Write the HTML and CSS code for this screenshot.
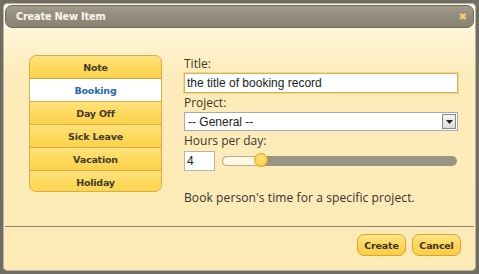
FILE: index.html
```html
<!DOCTYPE html>
<html>
<head>
<meta charset="utf-8">
<link rel="stylesheet" href="styles.css">
</head>
<body>
<div class="dialog">
  <div class="titlebar">
    <span class="title">Create New Item</span>
    <span class="close">&#x2716;</span>
  </div>
  <div class="content">
    <ul class="menu">
      <li class="item">Note</li>
      <li class="item active">Booking</li>
      <li class="item">Day Off</li>
      <li class="item">Sick Leave</li>
      <li class="item">Vacation</li>
      <li class="item last">Holiday</li>
    </ul>
    <div class="form">
      <div class="label">Title:</div>
      <div class="input text-input">the title of booking record</div>
      <div class="label">Project:</div>
      <div class="select">
        <span class="select-text">-- General --</span>
        <span class="select-btn"><svg width="7" height="4" viewBox="0 0 7 4"><path d="M0 0h7L3.5 4z" fill="#222"/></svg></span>
      </div>
      <div class="label">Hours per day:</div>
      <div class="hours-row">
        <div class="input hours">4</div>
        <div class="slider">
          <div class="track-fill"></div>
          <div class="thumb"></div>
        </div>
      </div>
      <p class="desc">Book person's time for a specific project.</p>
    </div>
  </div>
  <div class="footer">
    <button class="btn">Create</button>
    <button class="btn">Cancel</button>
  </div>
</div>
</body>
</html>
```
FILE: styles.css
```css
html, body {
  margin: 0;
  padding: 0;
}
body {
  background: #716c62;
  width: 479px;
  height: 274px;
  padding: 3px;
  box-sizing: border-box;
}
.dialog {
  width: 473px;
  height: 268px;
  box-sizing: border-box;
  border-radius: 5px;
  background: linear-gradient(#fffcee 0px, #fff5d6 30px, #fdecbb 70px, #fdeab5 100%);
  padding: 2px;
  display: flex;
  flex-direction: column;
  box-shadow: 0 0 0 1px #b7b2a4 inset;
}
.titlebar {
  height: 23px;
  box-sizing: border-box;
  border: 1px solid #6f695d;
  border-radius: 7px;
  background: linear-gradient(#a19b8b, #938c7d 50%, #8a8374);
  display: flex;
  align-items: center;
  justify-content: space-between;
  padding: 0 6px 0 10px;
}
.title {
  font-family: "DejaVu Sans", sans-serif;
  font-weight: bold;
  font-size: 9.8px;
  color: #fbf8ee;
  letter-spacing: -0.2px;
}
.close {
  color: #f5d562;
  font-size: 10px;
  font-family: "DejaVu Sans", sans-serif;
  line-height: 1;
  margin-top: 1px;
}
.content {
  display: flex;
  padding: 27px 0 0 24px;
  height: 199px;
  box-sizing: border-box;
  border-bottom: 1px solid #8a826d;
}
.menu {
  list-style: none;
  margin: 0;
  padding: 0;
  width: 133px;
  height: 137px;
  border: 1px solid #d7ae45;
  border-radius: 7px;
  overflow: hidden;
  box-sizing: border-box;
  background: #fcd54e;
}
.item {
  height: 23px;
  box-sizing: border-box;
  border-bottom: 1px solid #d9b046;
  background: linear-gradient(#ffe27e, #fdd95d 50%, #fcd24a);
  font-family: "DejaVu Sans", sans-serif;
  font-weight: bold;
  font-size: 9.5px;
  color: #3f3a2c;
  display: flex;
  align-items: center;
  justify-content: center;
  letter-spacing: -0.2px;
}
.item.last {
  border-bottom: none;
}
.item.active {
  background: #ffffff;
  color: #2468b4;
  border-top: 1px solid #c9a23c;
  margin-top: -1px;
  height: 24px;
}
.form {
  margin-left: 22px;
  padding-top: 5px;
  width: 274px;
  display: flex;
  flex-direction: column;
  font-family: "Open Sans", sans-serif;
  color: #333;
}
.label {
  font-size: 12px;
  line-height: 16px;
  height: 17px;
  margin-top: -4px;
  color: #3a3a2a;
}
.label + .input, .label + .select {
  margin-bottom: 6px;
}
.input {
  background: #fff;
  box-sizing: border-box;
  font-family: "Liberation Sans", sans-serif;
  font-size: 12px;
  color: #222;
  display: flex;
  align-items: center;
  padding-left: 2px;
}
.text-input {
  height: 20px;
  border: 1px solid #d9b24e;
  box-shadow: 0 0 0 1px #f2d58a;
  width: 274px;
}
.select {
  height: 19px;
  width: 274px;
  box-sizing: border-box;
  background: #fff;
  border: 1px solid #a9a9a9;
  display: flex;
  align-items: center;
  justify-content: space-between;
  font-family: "Liberation Sans", sans-serif;
  font-size: 12px;
  color: #222;
  padding-left: 3px;
  padding-right: 1px;
}
.select-btn {
  width: 14px;
  height: 15px;
  box-sizing: border-box;
  border: 1px solid #8a8a8a;
  background: linear-gradient(#f4f4f4, #dcdcdc);
  display: flex;
  align-items: center;
  justify-content: center;
}
.hours-row {
  display: flex;
  align-items: center;
}
.hours {
  width: 31px;
  height: 20px;
  border: 1px solid #b9b5a8;
  margin-top: 1px;
}
.slider {
  position: relative;
  margin-left: 7px;
  width: 235px;
  height: 10px;
  border-radius: 5px;
  background: #9a9484;
}
.track-fill {
  width: 40px;
  height: 10px;
  box-sizing: border-box;
  border: 1px solid #b7ae97;
  border-right: none;
  border-radius: 5px 0 0 5px;
  background: #fff8e2;
}
.thumb {
  position: absolute;
  left: 32px;
  top: -3px;
  width: 14px;
  height: 14px;
  box-sizing: border-box;
  border-radius: 50%;
  border: 1px solid #d9a42a;
  background: radial-gradient(circle at 50% 35%, #ffe17a, #fbc93c);
}
.desc {
  margin: 18px 0 0 0;
  font-size: 12px;
  color: #333;
  letter-spacing: 0.1px;
}
.footer {
  display: flex;
  justify-content: flex-end;
  gap: 6px;
  padding: 7px 13px 0 0;
}
.btn {
  width: 49px;
  height: 22px;
  border: 1px solid #d2a637;
  border-radius: 7px;
  background: linear-gradient(#ffe487, #fdd65a 50%, #fccd45);
  font-family: "DejaVu Sans", sans-serif;
  font-weight: bold;
  font-size: 9.5px;
  color: #3a3322;
  padding: 0;
  letter-spacing: -0.2px;
}
```
